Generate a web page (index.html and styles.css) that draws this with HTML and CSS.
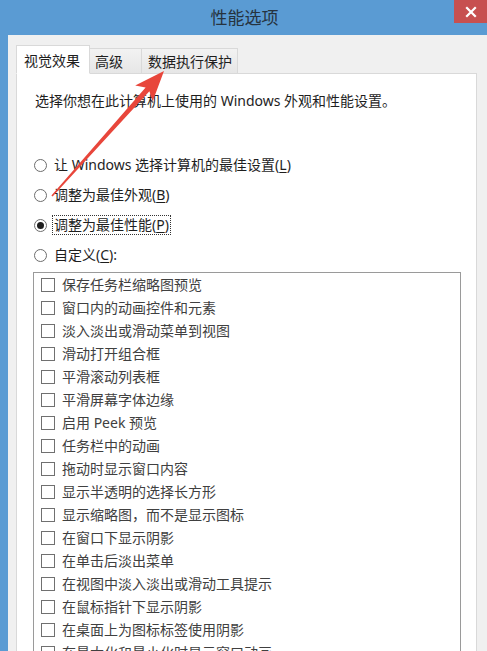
FILE: index.html
```html
<!DOCTYPE html>
<html lang="zh-CN">
<head>
<meta charset="utf-8">
<title>性能选项</title>
<link rel="stylesheet" href="styles.css">
</head>
<body>
<div class="window">
  <div class="titlebar">
    <div class="title">性能选项</div>
    <div class="close"><svg width="12" height="12" viewBox="0 0 12 12"><path d="M2 2 L10 10 M10 2 L2 10" stroke="#fff" stroke-width="2.2" stroke-linecap="square"/></svg></div>
  </div>
  <div class="frame">
    <div class="tabs">
      <div class="tab active">视觉效果</div>
      <div class="tab">高级</div>
      <div class="tab">数据执行保护</div>
    </div>
    <div class="panel">
      <p class="desc">选择你想在此计算机上使用的 Windows 外观和性能设置。</p>
      <div class="radios">
        <div class="radio"><span class="circle"></span><span class="rlabel">让 Windows 选择计算机的最佳设置(<u>L</u>)</span></div>
        <div class="radio"><span class="circle"></span><span class="rlabel">调整为最佳外观(<u>B</u>)</span></div>
        <div class="radio"><span class="circle checked"></span><span class="rlabel focus">调整为最佳性能(<u>P</u>)</span></div>
        <div class="radio"><span class="circle"></span><span class="rlabel">自定义(<u>C</u>):</span></div>
      </div>
      <div class="list">
        <div class="item"><span class="box"></span>保存任务栏缩略图预览</div>
        <div class="item"><span class="box"></span>窗口内的动画控件和元素</div>
        <div class="item"><span class="box"></span>淡入淡出或滑动菜单到视图</div>
        <div class="item"><span class="box"></span>滑动打开组合框</div>
        <div class="item"><span class="box"></span>平滑滚动列表框</div>
        <div class="item"><span class="box"></span>平滑屏幕字体边缘</div>
        <div class="item"><span class="box"></span>启用 Peek 预览</div>
        <div class="item"><span class="box"></span>任务栏中的动画</div>
        <div class="item"><span class="box"></span>拖动时显示窗口内容</div>
        <div class="item"><span class="box"></span>显示半透明的选择长方形</div>
        <div class="item"><span class="box"></span>显示缩略图，而不是显示图标</div>
        <div class="item"><span class="box"></span>在窗口下显示阴影</div>
        <div class="item"><span class="box"></span>在单击后淡出菜单</div>
        <div class="item"><span class="box"></span>在视图中淡入淡出或滑动工具提示</div>
        <div class="item"><span class="box"></span>在鼠标指针下显示阴影</div>
        <div class="item"><span class="box"></span>在桌面上为图标标签使用阴影</div>
        <div class="item"><span class="box"></span>在最大化和最小化时显示窗口动画</div>
      </div>
    </div>
  </div>
  <svg class="arrow" width="487" height="651" viewBox="0 0 487 651">
    <polygon fill="#e8463b" points="52.6,196.6 149.4,91.2 152.6,101.4 164,71 135.2,85.6 145.6,87.6 51.4,195.4"/>
  </svg>
</div>
</body>
</html>
```

FILE: styles.css
```css
html, body {
  margin: 0;
  padding: 0;
  width: 487px;
  height: 651px;
  overflow: hidden;
  background: #5a9bd3;
  font-family: "Noto Sans", "Noto Sans CJK SC", sans-serif;
}
.window {
  position: relative;
  width: 487px;
  height: 651px;
  display: flex;
  flex-direction: column;
}
.titlebar {
  height: 35px;
  flex: none;
  background: #5a9bd3;
  position: relative;
  display: flex;
  justify-content: center;
}
.title {
  font-family: "Noto Sans CJK SC", sans-serif;
  font-size: 17px;
  line-height: 34px;
  color: #26333f;
  margin-left: 2px;
}
.close {
  position: absolute;
  top: 0;
  right: 0;
  width: 33px;
  height: 23px;
  background: #c75050;
  display: flex;
  align-items: center;
  justify-content: center;
}
.frame {
  flex: 1;
  background: #f0f0f0;
  margin-left: 8px;
  padding: 10px 10px 0 8px;
  display: flex;
  flex-direction: column;
  min-height: 0;
}
.tabs {
  display: flex;
  align-items: flex-end;
  height: 29px;
  position: relative;
  z-index: 1;
  margin-bottom: -1px;
}
.tab {
  font-family: "Noto Sans CJK SC", sans-serif;
  font-size: 14px;
  color: #1e1e1e;
  height: 24px;
  line-height: 25px;
  padding: 0 6px;
  border: 1px solid #d9d9d9;
  background: linear-gradient(#f2f2f2, #e6e6e6);
  margin-left: -1px;
}
.tab.active {
  height: 27px;
  line-height: 28px;
  background: #fff;
  border-bottom-color: #fff;
  margin-left: 0;
  padding: 0 7px 0 7px;
  width: 58px;
  z-index: 2;
}
.tab:nth-child(2) { width: 40px; padding: 0 6px 0 5px; }
.tab:nth-child(3) { width: 84px; padding: 0 5px 0 6px; }
.panel {
  flex: 1;
  background: #fff;
  border: 1px solid #d9d9d9;
  border-bottom: none;
  padding: 0 15px 0 16px;
  min-height: 0;
  overflow: hidden;
}
.desc {
  margin: 17px 0 0 2px;
  font-size: 14px;
  line-height: 20px;
  color: #1e1e1e;
  font-family: "Noto Sans", "Noto Sans CJK SC", sans-serif;
}
.radios {
  margin-top: 44px;
  display: flex;
  flex-direction: column;
  gap: 10px;
}
.radio {
  display: flex;
  align-items: center;
  height: 20px;
  font-size: 14px;
  color: #1e1e1e;
}
.circle {
  width: 11px;
  height: 11px;
  border: 1px solid #6d6d6d;
  border-radius: 50%;
  background: #fff;
  margin-left: 1px;
  margin-right: 5px;
  position: relative;
  flex: none;
}
.circle.checked::after {
  content: "";
  position: absolute;
  left: 2px;
  top: 2px;
  width: 7px;
  height: 7px;
  border-radius: 50%;
  background: #1e1e1e;
}
.rlabel {
  padding: 0 1px;
  line-height: 18px;
  border: 1px dotted transparent;
}
.rlabel.focus {
  border-color: #333;
}
.rlabel u {
  text-underline-offset: 2px;
}
.list {
  margin-top: 7px;
  border: 1px solid #9a9a9a;
  border-bottom: none;
  height: 400px;
}
.item {
  display: flex;
  align-items: center;
  height: 23px;
  padding-left: 7px;
  font-family: "Noto Sans", "Noto Sans CJK SC", sans-serif;
  font-size: 14px;
  line-height: 20px;
  color: #404040;
}
.box {
  width: 12px;
  height: 12px;
  border: 1px solid #707070;
  background: #fff;
  margin-right: 7px;
  flex: none;
}
.arrow {
  position: absolute;
  left: 0;
  top: 0;
  pointer-events: none;
  z-index: 5;
}
```
